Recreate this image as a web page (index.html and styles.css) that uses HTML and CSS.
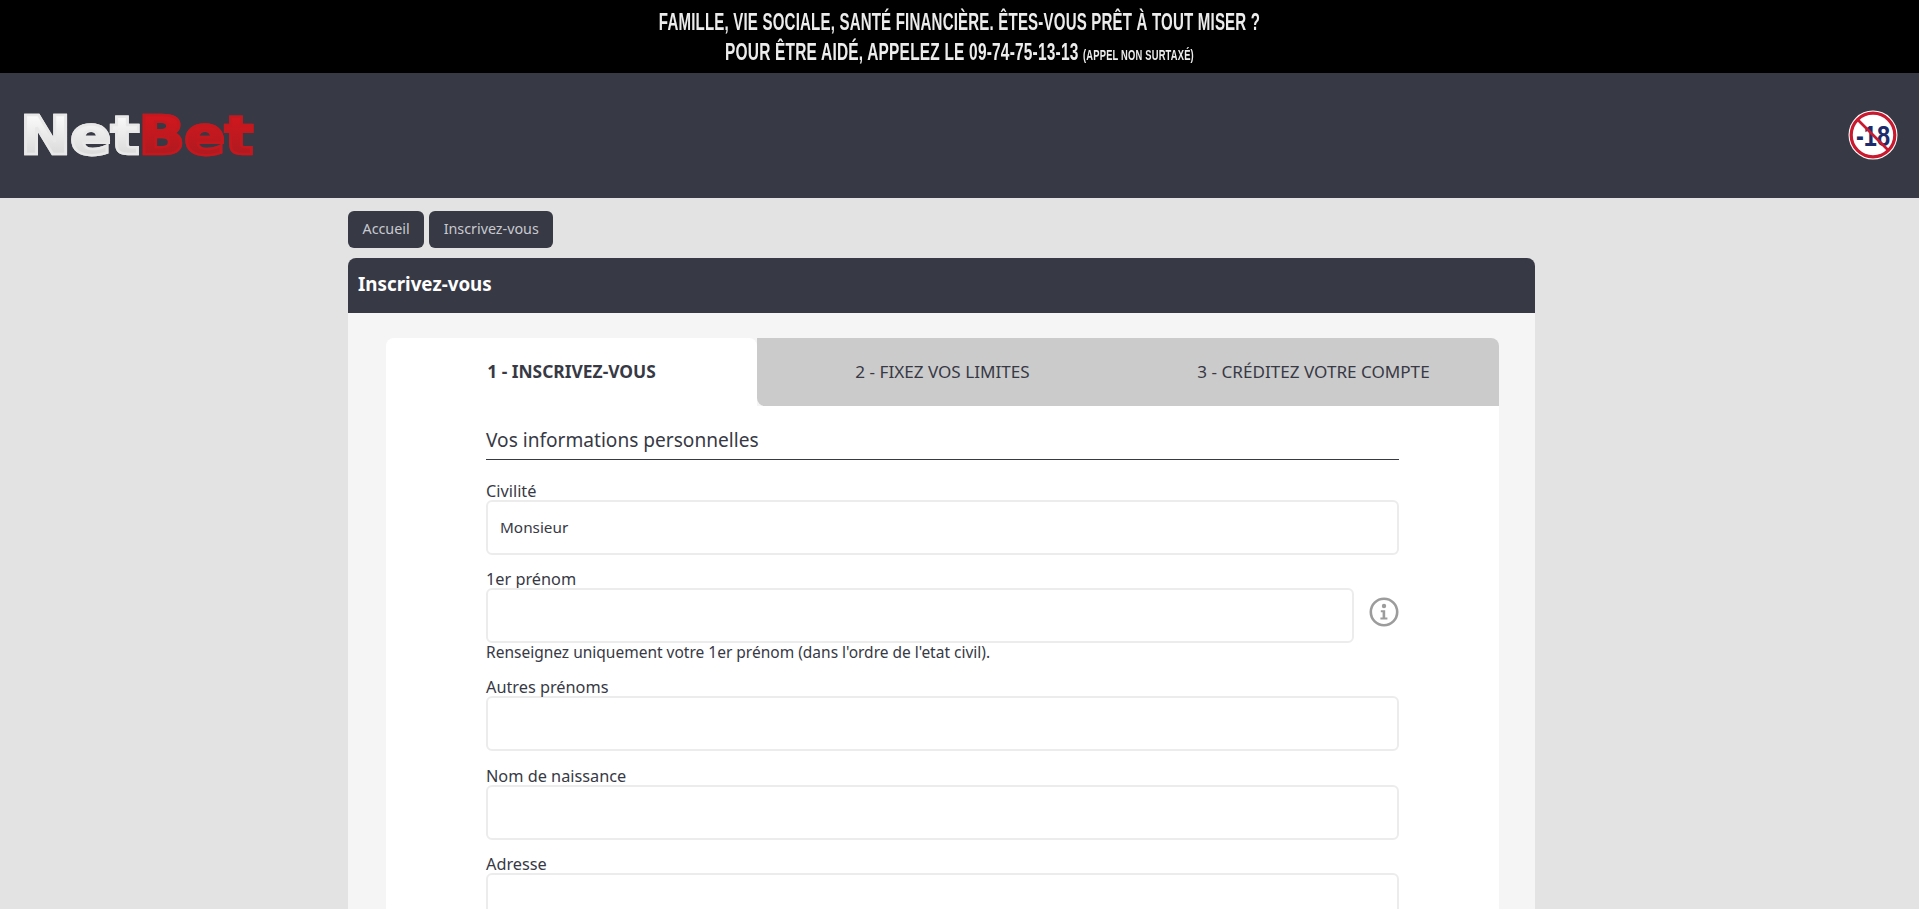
FILE: index.html
```html
<!DOCTYPE html>
<html lang="fr">
<head>
<meta charset="utf-8">
<title>NetBet - Inscrivez-vous</title>
<link rel="stylesheet" href="styles.css">
</head>
<body>
<div class="banner">
  <p class="banner-line">FAMILLE, VIE SOCIALE, SANTÉ FINANCIÈRE. ÊTES-VOUS PRÊT À TOUT MISER ?</p>
  <p class="banner-line second">POUR ÊTRE AIDÉ, APPELEZ LE 09-74-75-13-13 <small>(APPEL NON SURTAXÉ)</small></p>
</div>
<header class="site-header">
  <div class="logo"><span class="logo-net">Net</span><span class="logo-bet">Bet</span></div>
  <svg class="age" viewBox="0 0 50 50" width="50" height="50" aria-label="-18">
    <circle cx="25" cy="25" r="24.5" fill="#fff"/>
    <circle cx="25" cy="25" r="21.8" fill="none" stroke="#c8192e" stroke-width="3.2"/>
    <text x="25" y="36" text-anchor="middle" textLength="34" lengthAdjust="spacingAndGlyphs" class="age-text">-18</text>
    <line x1="10" y1="10" x2="40" y2="40" stroke="#c8192e" stroke-width="2.6"/>
  </svg>
</header>
<main class="page">
  <nav class="crumbs"><a class="crumb">Accueil</a><a class="crumb">Inscrivez-vous</a></nav>
  <section class="panel">
    <h1 class="panel-title">Inscrivez-vous</h1>
    <div class="panel-body">
      <div class="tabs">
        <div class="tab active">1 - INSCRIVEZ-VOUS</div>
        <div class="tab">2 - FIXEZ VOS LIMITES</div>
        <div class="tab">3 - CRÉDITEZ VOTRE COMPTE</div>
      </div>
      <form class="form">
        <div class="form-inner">
          <h2 class="section-title">Vos informations personnelles</h2>
          <div class="field">
            <label class="label">Civilité</label>
            <div class="input select">Monsieur</div>
          </div>
          <div class="field tight">
            <label class="label">1er prénom</label>
            <div class="input-row">
              <div class="input"></div>
              <svg class="info" viewBox="0 0 30 30" width="30" height="30" aria-hidden="true">
                <circle cx="15" cy="15" r="13.2" fill="none" stroke="#9c9c9c" stroke-width="2.6"/>
                <circle cx="15" cy="9" r="2.2" fill="#9c9c9c"/>
                <path d="M11.8 13.2h4.4v7.2h2.2v2h-7v-2h2.2v-5.2h-1.8z" fill="#9c9c9c"/>
              </svg>
            </div>
            <p class="hint">Renseignez uniquement votre 1er prénom (dans l'ordre de l'etat civil).</p>
          </div>
          <div class="field wide">
            <label class="label">Autres prénoms</label>
            <div class="input"></div>
          </div>
          <div class="field">
            <label class="label">Nom de naissance</label>
            <div class="input"></div>
          </div>
          <div class="field">
            <label class="label">Adresse</label>
            <div class="input"></div>
          </div>
        </div>
      </form>
    </div>
  </section>
</main>
</body>
</html>
```

FILE: styles.css
```css
* { box-sizing: border-box; }
html, body { margin: 0; height: 909px; overflow: hidden; }
body { background: #e3e3e3; font-family: "Noto Sans", "Liberation Sans", sans-serif; color: #373945; }

.banner { height: 73px; background: #000; padding-top: 7px; text-align: center; color: #ececec; overflow: hidden; }
.banner-line { margin: 0; height: 30px; line-height: 30px; font-family: "Liberation Sans", sans-serif; font-size: 24px; font-weight: 700; letter-spacing: 0.3px; transform: scaleX(0.627); white-space: nowrap; }
.banner-line.second { transform: scaleX(0.645); }
.banner-line small { font-size: 14.5px; }

.site-header { height: 125px; background: #373945; display: flex; align-items: center; justify-content: space-between; padding: 0 21px 2px 20px; }
.logo { font-family: "DejaVu Sans", sans-serif; font-weight: 700; font-size: 53px; line-height: 1; letter-spacing: -1px; display: flex; transform: translateY(1px) scaleX(1.155); transform-origin: left; }
.logo-net { background: linear-gradient(#fff, #d4d4d4); -webkit-background-clip: text; background-clip: text; color: transparent; -webkit-text-stroke: 2.5px #e8e8e8; }
.logo-bet { background: linear-gradient(#d8161e, #a81b20); -webkit-background-clip: text; background-clip: text; color: transparent; -webkit-text-stroke: 2.5px #c4181f; }
.age { display: block; }
.age-text { font-family: "Liberation Sans", sans-serif; font-weight: 700; font-size: 30px; fill: #1d2a6b; }

.page { width: 1187px; margin-left: 348px; }
.crumbs { display: flex; gap: 5px; padding-top: 13px; }
.crumb { height: 37px; line-height: 36px; padding: 0 14.5px; background: #373945; color: #c8c9d0; font-size: 14.3px; border-radius: 6px; }

.panel { margin-top: 10px; }
.panel-title { margin: 0; height: 55px; line-height: 52px; padding-left: 10px; background: #373945; color: #fff; font-size: 18.8px; font-weight: 700; border-radius: 8px 8px 0 0; }
.panel-body { background: #f5f5f5; padding: 25px 36px 0 38px; height: 600px; }

.tabs { display: grid; grid-template-columns: 371px 1fr 1fr; height: 68px; }
.tab { display: flex; align-items: center; justify-content: center; padding-bottom: 2px; font-size: 17.1px; color: #373945; background: #cbcbcb; }
.tab.active { background: #fff; font-weight: 700; border-radius: 8px 8px 0 0; font-size: 17.4px; }
.tab:nth-child(2) { border-radius: 0 0 0 8px; }
.tab:nth-child(3) { border-radius: 0 8px 0 0; }

.form { background: #fff; height: 520px; padding: 0 100px; }
.form-inner { width: 913px; }
.section-title { margin: 0 0 22.5px; padding-top: 20px; height: 54px; line-height: 28px; font-size: 19.1px; font-weight: 400; border-bottom: 1px solid #373945; }

.field { margin-bottom: 16px; }
.field.tight { margin-bottom: 15px; }
.field.wide { margin-bottom: 17px; }
.label { display: block; height: 17px; line-height: 17px; font-size: 16.3px; color: #373945; }
.input { height: 55px; flex: 1; background: #fff; border: 2px solid #ececec; border-radius: 6px; }
.select { padding-left: 12px; line-height: 51px; font-size: 15.3px; }
.input-row { display: flex; align-items: flex-start; gap: 15px; }
.info { margin: 9px 0 0; display: block; }
.hint { margin: 0; height: 21px; line-height: 19px; font-size: 15.5px; }
```
